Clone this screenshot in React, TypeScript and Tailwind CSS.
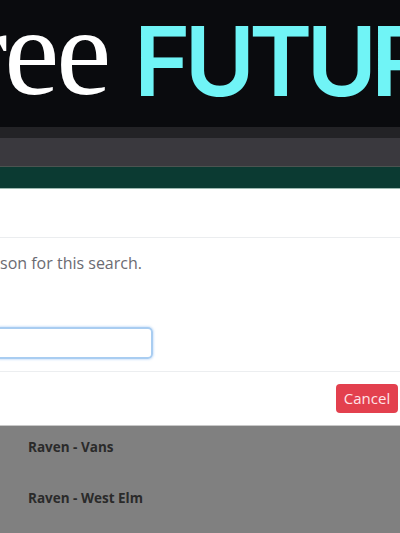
import React from 'react';

const App: React.FC = () => {
  return (
    <div className="w-[400px] h-[533px] overflow-hidden bg-[#808080] font-[Open_Sans]">
      {/* Title banner */}
      <div className="relative h-[127px] bg-[#0a0b0e] overflow-hidden">
        <span className="absolute left-[-34px] top-[-9px] font-[Times] text-[124px] leading-none text-white tracking-[-3px]">
          ree
        </span>
        <span className="absolute left-[134px] top-[13px] font-[Inter] font-semibold text-[96px] leading-none text-[#70f4f6] tracking-[-6px] whitespace-nowrap">
          FUTURE
        </span>
      </div>

      {/* Browser chrome */}
      <div className="h-[11px] bg-[#232326]" />
      <div className="h-[29px] bg-[#3a393e] border-b border-[#4b5350]" />
      <div className="h-[22px] bg-[#0b3a32] border-b border-[#9db8b1]" />

      {/* Modal */}
      <div className="bg-white">
        <div className="h-[49px] border-b border-[#ebedef]" />
        <div className="pt-[14px] pb-[53px]">
          <p className="text-[16px] leading-[22px] text-[#6b6b72]">son for this search.</p>
        </div>
        <div className="pb-[12px]">
          <div className="w-[153px] h-[32px] rounded-r-[5px] border-2 border-l-0 border-[#a9cdf1] shadow-[0_0_2px_1px_rgba(128,180,240,0.35)]" />
        </div>
        <div className="border-t border-[#eceef0] flex justify-end pt-[12px] pb-[12px] pr-[2px]">
          <button className="w-[62px] h-[29px] rounded-[4px] bg-[#e3404e] text-[#ffe4e8] text-[15px] leading-none">
            Cancel
          </button>
        </div>
      </div>

      {/* Backdrop list */}
      <div className="border-t border-[#c8c8c8] bg-[#808080]">
        <div className="h-[42px] flex items-center pl-[28px]">
          <span className="font-bold text-[13.5px] text-[#2a2a2a]">Raven - Vans</span>
        </div>
        <div className="h-[60px] flex items-center pl-[28px]">
          <span className="font-bold text-[13.5px] text-[#2a2a2a]">Raven - West Elm</span>
        </div>
      </div>
    </div>
  );
};

export default App;
